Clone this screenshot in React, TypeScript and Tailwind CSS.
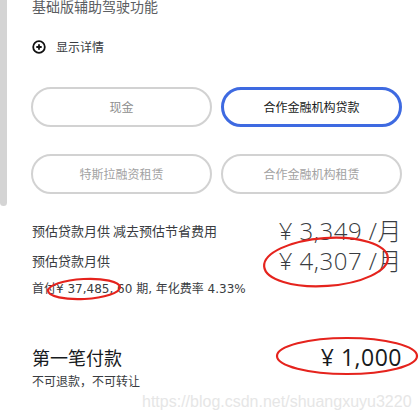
import React from 'react';

const cjk = { fontFamily: '"Noto Sans CJK SC", "Noto Sans", sans-serif' };
const num = { fontFamily: '"Open Sans", "Noto Sans CJK SC", sans-serif' };
const wide = { fontFamily: '"DejaVu Sans", "Noto Sans CJK SC", sans-serif' };

const options = [
    { label: '现金', active: false, enabled: true },
    { label: '合作金融机构贷款', active: true, enabled: true },
    { label: '特斯拉融资租赁', active: false, enabled: false },
    { label: '合作金融机构租赁', active: false, enabled: false },
];

const PlusCircle: React.FC = () => (
    <svg width="14" height="14" viewBox="0 0 14 14" fill="none">
        <circle cx="7" cy="7" r="5.8" stroke="#111" strokeWidth="1.8" />
        <path d="M7 4.3v5.4M4.3 7h5.4" stroke="#111" strokeWidth="1.8" />
    </svg>
);

const App: React.FC = () => {
    return (
        <div className="relative w-[420px] h-[417px] overflow-hidden bg-white text-[#393c41]" style={cjk}>
            <div className="flex">
                <div className="w-[7px] h-[206px] bg-[#d4d4d4] rounded-b-[4px] shrink-0" />
                <div className="flex-1 pl-[25px] pr-[18px]">
                    <p className="-mt-[4px] text-[14px] leading-[20px] text-[#5c5e62]">基础版辅助驾驶功能</p>
                    <div className="mt-[23px] flex items-center gap-[10px] h-[16px]">
                        <PlusCircle />
                        <span className="text-[12px] text-[#393c41]">显示详情</span>
                    </div>
                    <div className="mt-[32px] grid grid-cols-2 gap-x-[9px] gap-y-[27px] -ml-[1px]">
                        {options.map(o => (
                            <button
                                key={o.label}
                                className={`h-[40px] rounded-full flex items-center justify-center text-[12px] ${o.active ? 'border-[3px] border-[#3e6ae1] text-[#171a20]' : 'border-2 border-[#d2d2d2] ' + (o.enabled ? 'text-[#8e8e8e]' : 'text-[#a2a2a2]')}`}
                            >
                                {o.label}
                            </button>
                        ))}
                    </div>
                </div>
            </div>

            <div className="pl-[32px] pr-[18px]">
                <div className="mt-[10px] flex items-center justify-between h-[30px]">
                    <span className="text-[13px]">预估贷款月供 减去预估节省费用</span>
                    <span className="text-[24px] font-light tracking-[0.5px]" style={num}>¥ 3,349 /月</span>
                </div>
                <div className="flex items-center justify-between h-[30px]">
                    <span className="text-[13px]">预估贷款月供</span>
                    <span className="text-[24px] font-light tracking-[0.5px]" style={num}>¥ 4,307 /月</span>
                </div>
                <p className="mt-[5px] text-[12px] leading-[16px]" style={wide}>首付¥ 37,485, 60 期, 年化费率 4.33%</p>

                <div className="mt-[47px] flex items-center justify-between h-[26px]">
                    <span className="text-[18px] text-[#171a20]">第一笔付款</span>
                    <span className="text-[23px] font-medium tracking-[0.5px] text-[#171a20]" style={num}>¥ 1,000</span>
                </div>
                <p className="mt-[3px] text-[12px] leading-[16px]">不可退款，不可转让</p>
            </div>

            <svg className="absolute inset-0 pointer-events-none" width="420" height="417" viewBox="0 0 420 417" fill="none">
                <ellipse cx="326" cy="262" rx="62" ry="24" transform="rotate(-4 326 262)" stroke="#e5231d" strokeWidth="2.2" />
                <ellipse cx="84" cy="289" rx="36" ry="10" transform="rotate(-3 84 289)" stroke="#e5231d" strokeWidth="2.2" />
                <ellipse cx="347" cy="356" rx="70" ry="18" stroke="#e5231d" strokeWidth="2.2" />
            </svg>
            <span
                className="absolute left-[142px] top-[390px] text-[16px] text-[#e6e6e6]"
                style={{ fontFamily: '"Liberation Sans", Arial, sans-serif' }}
            >
                https://blog.csdn.net/shuangxuyu3220
            </span>
        </div>
    );
};

export default App;
